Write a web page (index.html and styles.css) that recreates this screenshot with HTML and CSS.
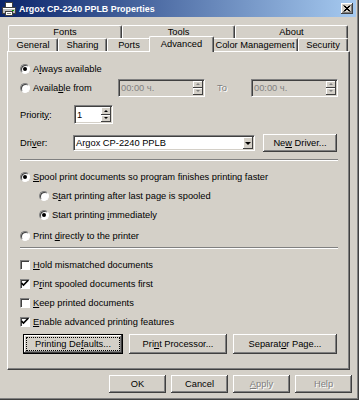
FILE: index.html
```html
<!DOCTYPE html>
<html lang="en">
<head>
    <meta charset="UTF-8">
    <title>Argox CP-2240 PPLB Properties</title>
    <link rel="stylesheet" href="styles.css">
</head>
<body>
    <div class="window">
        <div class="titlebar">
            <svg class="app-icon" width="14" height="14" viewBox="0 0 14 14">
                <rect x="3.5" y="0.5" width="7" height="5" fill="#fff" stroke="#404040"/>
                <rect x="0.5" y="5.5" width="13" height="6" fill="#c0c0c0" stroke="#404040"/>
                <rect x="1" y="6" width="12" height="1" fill="#fff"/>
                <rect x="10" y="8" width="2" height="1" fill="#00a000"/>
                <rect x="3.5" y="9.5" width="7" height="4" fill="#fff" stroke="#404040"/>
                <rect x="5" y="11" width="4" height="1" fill="#808080"/>
            </svg>
            <span class="title">Argox CP-2240 PPLB Properties</span>
            <span class="close-btn">
                <svg width="8" height="7" viewBox="0 0 8 7">
                    <path d="M0.5 0.5 L6.5 6.5 M1.5 0.5 L7.5 6.5 M6.5 0.5 L0.5 6.5 M7.5 0.5 L1.5 6.5" stroke="#000" stroke-width="1"/>
                </svg>
            </span>
        </div>

        <div class="tabs">
            <div class="tab-row tab-row-back">
                <div class="tab">Fonts</div>
                <div class="tab">Tools</div>
                <div class="tab">About</div>
            </div>
            <div class="tab-row tab-row-front">
                <div class="tab">General</div>
                <div class="tab">Sharing</div>
                <div class="tab">Ports</div>
                <div class="tab tab-active">Advanced</div>
                <div class="tab">Color Management</div>
                <div class="tab">Security</div>
            </div>
        </div>

        <div class="panel">
            <div class="row row-always">
                <span class="radio checked"></span>
                <span>A<u>l</u>ways available</span>
            </div>
            <div class="row">
                <span class="radio"></span>
                <span class="avail-label">Availa<u>b</u>le from</span>
                <div class="field time-field disabled">
                    <span class="field-text">00:00 ч.</span>
                    <span class="spin">
                        <span class="spin-btn"><i class="arrow-up"></i></span>
                        <span class="spin-btn"><i class="arrow-down"></i></span>
                    </span>
                </div>
                <span class="to-label">To</span>
                <div class="field time-field disabled">
                    <span class="field-text">00:00 ч.</span>
                    <span class="spin">
                        <span class="spin-btn"><i class="arrow-up"></i></span>
                        <span class="spin-btn"><i class="arrow-down"></i></span>
                    </span>
                </div>
            </div>
            <div class="row row-priority">
                <span class="field-label">Priorit<u>y</u>:</span>
                <div class="field priority-field">
                    <span class="field-text">1</span>
                    <span class="spin">
                        <span class="spin-btn"><i class="arrow-up"></i></span>
                        <span class="spin-btn"><i class="arrow-down"></i></span>
                    </span>
                </div>
            </div>
            <div class="row row-driver">
                <span class="field-label driver-label">Dri<u>v</u>er:</span>
                <div class="field combo">
                    <span class="field-text">Argox CP-2240 PPLB</span>
                    <span class="combo-btn"><i class="arrow-down big"></i></span>
                </div>
                <span class="button new-driver"><span>Ne<u>w</u> Driver...</span></span>
            </div>

            <div class="separator sep-1"></div>

            <div class="row row-spool">
                <span class="radio checked"></span>
                <span><u>S</u>pool print documents so program finishes printing faster</span>
            </div>
            <div class="row row-sub">
                <span class="radio"></span>
                <span>S<u>t</u>art printing after last page is spooled</span>
            </div>
            <div class="row row-sub">
                <span class="radio checked"></span>
                <span>Start printing <u>i</u>mmediately</span>
            </div>
            <div class="row row-direct">
                <span class="radio"></span>
                <span>Print <u>d</u>irectly to the printer</span>
            </div>

            <div class="separator sep-2"></div>

            <div class="row row-check-first">
                <span class="checkbox"></span>
                <span><u>H</u>old mismatched documents</span>
            </div>
            <div class="row">
                <span class="checkbox checked"><svg width="8" height="7" viewBox="0 0 8 7"><path d="M0.5 3 L2.5 5 L7 0.5" stroke="#000" stroke-width="1.6" fill="none"/></svg></span>
                <span>P<u>r</u>int spooled documents first</span>
            </div>
            <div class="row">
                <span class="checkbox"></span>
                <span><u>K</u>eep printed documents</span>
            </div>
            <div class="row">
                <span class="checkbox checked"><svg width="8" height="7" viewBox="0 0 8 7"><path d="M0.5 3 L2.5 5 L7 0.5" stroke="#000" stroke-width="1.6" fill="none"/></svg></span>
                <span><u>E</u>nable advanced printing features</span>
            </div>

            <div class="panel-buttons">
                <span class="button btn-defaults focused"><span class="focus-rect"><span>Printing De<u>f</u>aults...</span></span></span>
                <span class="button btn-processor"><span>Pri<u>n</u>t Processor...</span></span>
                <span class="button btn-separator"><span>Separat<u>o</u>r Page...</span></span>
            </div>
        </div>

        <div class="dialog-buttons">
            <span class="button"><span>OK</span></span>
            <span class="button"><span>Cancel</span></span>
            <span class="button disabled"><span><u>A</u>pply</span></span>
            <span class="button disabled"><span>Help</span></span>
        </div>
    </div>
</body>
</html>
```

FILE: styles.css
```css
body {
    margin: 0;
    background-color: #d4d0c8;
    font-family: "Liberation Sans", Arial, sans-serif;
    font-size: 9.3px;
    color: #000;
}
u {
    text-decoration-thickness: 1px;
    text-underline-offset: 1px;
}
.window {
    width: 359px;
    height: 400px;
    box-sizing: border-box;
    background: #d4d0c8;
    box-shadow: inset -1px -1px #404040, inset -2px -2px #808080;
}
.titlebar {
    width: 356px;
    height: 17px;
    display: flex;
    align-items: center;
    background: linear-gradient(to right, #0a246a, #a6caf0);
    color: #fff;
}
.app-icon {
    margin: 0 3px 0 2px;
}
.title {
    font-weight: bold;
    font-size: 8.9px;
    flex: 1;
}
.close-btn {
    width: 12px;
    height: 11px;
    margin-right: 3px;
    display: flex;
    align-items: center;
    justify-content: center;
    background: #d4d0c8;
    box-shadow: inset -1px -1px #404040, inset 1px 1px #fff, inset -2px -2px #808080;
}

/* tabs */
.tabs {
    margin: 8px 0 0 8px;
    width: 340px;
}
.tab-row {
    display: grid;
    height: 13px;
}
.tab-row-back {
    grid-template-columns: 114px 113px 113px;
}
.tab-row-front {
    grid-template-columns: 50px 49px 44px 61px 86px 50px;
}
.tab {
    box-sizing: border-box;
    border-top: 1px solid #fff;
    border-left: 1px solid #fff;
    border-right: 1px solid #404040;
    border-radius: 2px 2px 0 0;
    box-shadow: inset -1px 0 #808080;
    background: #d4d0c8;
    text-align: center;
    line-height: 12px;
    white-space: nowrap;
}
.tab-active {
    position: relative;
    z-index: 2;
    margin: -2px -2px -1px -2px;
    line-height: 14px;
}

/* panel */
.panel {
    margin-left: 7px;
    width: 343px;
    height: 319px;
    box-sizing: border-box;
    padding: 0 11px 0 12px;
    border-top: 1px solid #fff;
    border-left: 1px solid #fff;
    border-right: 1px solid #404040;
    border-bottom: 1px solid #404040;
    box-shadow: inset -1px -1px #808080;
}
.row {
    display: flex;
    align-items: center;
    height: 19px;
    white-space: nowrap;
}
.row-always {
    margin-top: 8px;
    height: 18px;
}
.row-priority {
    margin-top: 8px;
}
.row-driver {
    margin-top: 10px;
    height: 18px;
}
.row-spool {
    margin-top: 6px;
}
.row-sub {
    padding-left: 19px;
}
.row-direct {
    margin-top: 2px;
}
.row-check-first {
    margin-top: 6px;
}
.separator {
    height: 0;
    border-top: 1px solid #808080;
    border-bottom: 1px solid #fff;
}
.sep-1 {
    margin-top: 7px;
}
.sep-2 {
    margin-top: 2px;
}

/* radios and checkboxes */
.radio,
.checkbox {
    width: 10px;
    height: 10px;
    box-sizing: border-box;
    margin-right: 3px;
    border: 1px solid;
    border-color: #808080 #fff #fff #808080;
    background: #fff;
    box-shadow: inset 1px 1px #404040;
    display: flex;
    align-items: center;
    justify-content: center;
    flex-shrink: 0;
}
.radio {
    border-radius: 50%;
}
.radio.checked::after {
    content: "";
    width: 4px;
    height: 4px;
    border-radius: 50%;
    background: #000;
}

/* fields */
.field {
    box-sizing: border-box;
    height: 18px;
    display: flex;
    align-items: center;
    background: #fff;
    border: 1px solid;
    border-color: #808080 #fff #fff #808080;
    box-shadow: inset 1px 1px #404040, inset -1px -1px #d4d0c8;
}
.field.disabled {
    background: #d4d0c8;
    color: #808080;
}
.field-text {
    flex: 1;
    padding-left: 2px;
}
.avail-label {
    width: 85px;
}
.time-field {
    width: 87px;
}
.to-label {
    margin-left: 12px;
    width: 34px;
    color: #808080;
    text-shadow: 1px 1px #fff;
}
.field-label {
    width: 54px;
}
.driver-label {
    width: 53px;
}
.priority-field {
    width: 39px;
    height: 19px;
}
.spin {
    display: flex;
    flex-direction: column;
    align-self: stretch;
    margin: 1px 1px 1px 0;
}
.spin-btn {
    flex: 1;
    width: 10px;
    display: flex;
    align-items: center;
    justify-content: center;
    background: #d4d0c8;
    box-shadow: inset -1px -1px #404040, inset 1px 1px #fff;
}
.arrow-up,
.arrow-down {
    width: 0;
    height: 0;
    border-left: 2px solid transparent;
    border-right: 2px solid transparent;
}
.arrow-up {
    border-bottom: 2px solid #000;
}
.arrow-down {
    border-top: 2px solid #000;
}
.arrow-down.big {
    border-left-width: 3px;
    border-right-width: 3px;
    border-top-width: 3px;
}
.disabled .arrow-up {
    border-bottom-color: #808080;
}
.disabled .arrow-down {
    border-top-color: #808080;
}
.combo {
    width: 182px;
    height: 16px;
}
.combo-btn {
    align-self: stretch;
    width: 10px;
    margin: 1px;
    display: flex;
    align-items: center;
    justify-content: center;
    background: #d4d0c8;
    box-shadow: inset -1px -1px #404040, inset 1px 1px #fff;
}

/* buttons */
.button {
    box-sizing: border-box;
    display: flex;
    align-items: center;
    justify-content: center;
    height: 18px;
    background: #d4d0c8;
    box-shadow: inset -1px -1px #404040, inset 1px 1px #fff, inset -2px -2px #808080;
    white-space: nowrap;
}
.button.disabled {
    color: #808080;
    text-shadow: 1px 1px #fff;
}
.new-driver {
    margin-left: 8px;
    width: 74px;
}
.panel-buttons {
    display: flex;
    gap: 6px;
    margin: 3px 0 0 3px;
}
.panel-buttons .button {
    height: 20px;
}
.btn-defaults {
    width: 100px;
}
.btn-processor {
    width: 98px;
}
.btn-separator {
    width: 104px;
}
.button.focused {
    border: 1px solid #000;
    padding: 3px;
}
.focus-rect {
    flex: 1;
    align-self: stretch;
    display: flex;
    align-items: center;
    justify-content: center;
    outline: 1px dotted #000;
}
.dialog-buttons {
    display: flex;
    justify-content: flex-end;
    gap: 5px;
    margin: 5px 7px 0 0;
}
.dialog-buttons .button {
    width: 57px;
}
```
